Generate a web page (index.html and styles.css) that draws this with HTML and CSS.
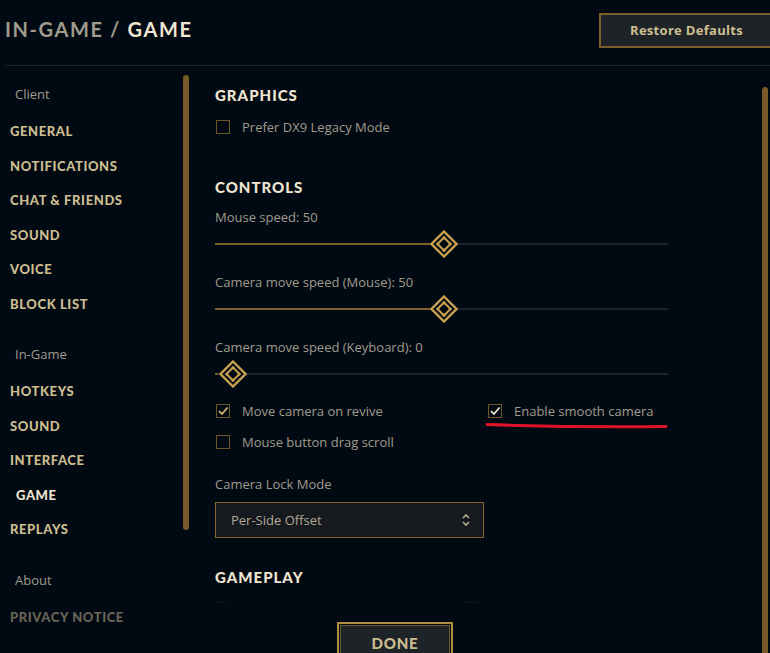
FILE: index.html
```html
<!DOCTYPE html>
<html>
<head>
<meta charset="utf-8">
<link rel="stylesheet" href="styles.css">
</head>
<body>
<div class="app">
  <header class="topbar">
    <h1 class="title"><span class="crumb">IN-GAME / </span><span class="current">GAME</span></h1>
    <button class="restore">Restore Defaults</button>
  </header>
  <div class="main">
    <nav class="sidebar">
      <div class="navlist">
        <div class="group">
          <div class="group-label">Client</div>
          <div class="nav-item">GENERAL</div>
          <div class="nav-item">NOTIFICATIONS</div>
          <div class="nav-item">CHAT &amp; FRIENDS</div>
          <div class="nav-item">SOUND</div>
          <div class="nav-item">VOICE</div>
          <div class="nav-item">BLOCK LIST</div>
        </div>
        <div class="group">
          <div class="group-label">In-Game</div>
          <div class="nav-item">HOTKEYS</div>
          <div class="nav-item">SOUND</div>
          <div class="nav-item">INTERFACE</div>
          <div class="nav-item active">GAME</div>
          <div class="nav-item">REPLAYS</div>
        </div>
        <div class="group">
          <div class="group-label">About</div>
          <div class="nav-item faded">PRIVACY NOTICE</div>
        </div>
      </div>
      <div class="scrollbar left-bar"></div>
    </nav>
    <section class="content">
      <h2 class="section-title first">GRAPHICS</h2>
      <label class="check-row gap-graphics"><span class="box"></span><span class="check-label">Prefer DX9 Legacy Mode</span></label>

      <h2 class="section-title controls">CONTROLS</h2>

      <div class="slider-block first-block">
        <div class="field-label">Mouse speed: 50</div>
        <div class="slider">
          <div class="track"></div>
          <div class="fill" style="width: 215px"></div>
          <svg class="thumb" style="left: 215px" viewBox="0 0 28 28" width="28" height="28"><polygon points="14,1.5 26.5,14 14,26.5 1.5,14" fill="#010a13" stroke="#c8a050" stroke-width="2.4"/><polygon points="14,7.5 20.5,14 14,20.5 7.5,14" fill="#010a13" stroke="#c8a050" stroke-width="2"/><circle cx="14" cy="7.8" r="1.6" fill="#c8a050"/><circle cx="14" cy="20.2" r="1.6" fill="#c8a050"/><circle cx="7.8" cy="14" r="1.6" fill="#c8a050"/><circle cx="20.2" cy="14" r="1.6" fill="#c8a050"/></svg>
        </div>
      </div>
      <div class="slider-block">
        <div class="field-label">Camera move speed (Mouse): 50</div>
        <div class="slider">
          <div class="track"></div>
          <div class="fill" style="width: 215px"></div>
          <svg class="thumb" style="left: 215px" viewBox="0 0 28 28" width="28" height="28"><polygon points="14,1.5 26.5,14 14,26.5 1.5,14" fill="#010a13" stroke="#c8a050" stroke-width="2.4"/><polygon points="14,7.5 20.5,14 14,20.5 7.5,14" fill="#010a13" stroke="#c8a050" stroke-width="2"/><circle cx="14" cy="7.8" r="1.6" fill="#c8a050"/><circle cx="14" cy="20.2" r="1.6" fill="#c8a050"/><circle cx="7.8" cy="14" r="1.6" fill="#c8a050"/><circle cx="20.2" cy="14" r="1.6" fill="#c8a050"/></svg>
        </div>
      </div>
      <div class="slider-block">
        <div class="field-label">Camera move speed (Keyboard): 0</div>
        <div class="slider">
          <div class="track"></div>
          <div class="fill" style="width: 3px"></div>
          <svg class="thumb" style="left: 4px" viewBox="0 0 28 28" width="28" height="28"><polygon points="14,1.5 26.5,14 14,26.5 1.5,14" fill="#010a13" stroke="#c8a050" stroke-width="2.4"/><polygon points="14,7.5 20.5,14 14,20.5 7.5,14" fill="#010a13" stroke="#c8a050" stroke-width="2"/><circle cx="14" cy="7.8" r="1.6" fill="#c8a050"/><circle cx="14" cy="20.2" r="1.6" fill="#c8a050"/><circle cx="7.8" cy="14" r="1.6" fill="#c8a050"/><circle cx="20.2" cy="14" r="1.6" fill="#c8a050"/></svg>
        </div>
      </div>

      <div class="check-grid">
        <label class="check-row"><span class="box checked"><svg viewBox="0 0 14 14" width="14" height="14"><path d="M3 7.2 L6 10 L11.5 3.5" fill="none" stroke="#d8b66a" stroke-width="1.8"/></svg></span><span class="check-label">Move camera on revive</span></label>
        <label class="check-row smooth"><span class="box checked"><svg viewBox="0 0 14 14" width="14" height="14"><path d="M3 7.2 L6 10 L11.5 3.5" fill="none" stroke="#e8e0cc" stroke-width="1.8"/></svg></span><span class="check-label">Enable smooth camera</span>
          <svg class="underline" viewBox="0 0 184 8" width="184" height="8"><path d="M2 2.5 Q 90 5.5 181 4.5" fill="none" stroke="#e0132b" stroke-width="3" stroke-linecap="round"/></svg>
        </label>
        <label class="check-row"><span class="box"></span><span class="check-label">Mouse button drag scroll</span></label>
      </div>

      <div class="field-label lock-label">Camera Lock Mode</div>
      <div class="select">
        <span>Per-Side Offset</span>
        <svg class="arrows" viewBox="0 0 10 16" width="10" height="16"><path d="M2 6 L5 3 L8 6" fill="none" stroke="#b5ab92" stroke-width="1.6"/><path d="M2 10 L5 13 L8 10" fill="none" stroke="#b5ab92" stroke-width="1.6"/></svg>
      </div>

      <h2 class="section-title gameplay">GAMEPLAY</h2>
      <div class="fade-row"><span class="dash"></span><span class="dash right"></span></div>
    </section>
    <div class="scrollbar right-bar"></div>
  </div>
  <div class="done-wrap">
    <span class="flare l"></span>
    <button class="done">DONE</button>
    <span class="flare r"></span>
  </div>
</div>
</body>
</html>
```
FILE: styles.css
```css
html, body {
  margin: 0;
  padding: 0;
  background: #010a13;
  width: 770px;
  height: 653px;
  overflow: hidden;
}
.app {
  position: relative;
  width: 770px;
  height: 653px;
  overflow: hidden;
  font-family: "Open Sans", "Liberation Sans", sans-serif;
}
.topbar {
  height: 66px;
  box-sizing: border-box;
  margin-left: 5px;
  border-bottom: 1px solid #1b252c;
  display: flex;
  justify-content: space-between;
  align-items: flex-start;
}
.title {
  margin: 16px 0 0 0;
  font-family: "Lato", sans-serif;
  font-weight: 700;
  font-size: 20px;
  line-height: 26px;
  letter-spacing: 1.6px;
}
.crumb { color: #a09b8c; }
.current { color: #f0e6d2; }
.restore {
  margin-top: 13px;
  margin-right: -12px;
  width: 183px;
  height: 35px;
  box-sizing: border-box;
  background: #1e2328;
  border: 2px solid #7c5e2a;
  color: #cdbe91;
  font-family: "Open Sans", sans-serif;
  font-weight: 700;
  font-size: 13px;
  letter-spacing: 0.3px;
  padding: 0 8px 1px 0;
}
.main {
  display: flex;
  height: 587px;
}
.sidebar {
  width: 190px;
  display: flex;
  flex-shrink: 0;
}
.navlist {
  width: 183px;
  padding-top: 8px;
}
.group + .group { margin-top: 13px; }
.group-label {
  height: 40px;
  line-height: 40px;
  padding-left: 15px;
  font-size: 13px;
  color: #a09b8c;
}
.nav-item {
  height: 34.5px;
  line-height: 34.5px;
  padding-left: 10px;
  font-family: "Lato", sans-serif;
  font-weight: 900;
  font-size: 13px;
  letter-spacing: 0.6px;
  color: #cdbe91;
}
.nav-item.active {
  color: #f0e6d2;
  padding-left: 16px;
}
.nav-item.faded { color: #6a6556; }
.scrollbar {
  width: 6px;
  background: #785a28;
  border-radius: 3px;
  flex-shrink: 0;
}
.left-bar {
  margin-top: 9px;
  height: 455px;
}
.content {
  flex: 1;
  padding-left: 25px;
  padding-top: 19px;
}
.right-bar {
  margin-top: 21px;
  margin-right: 2px;
  height: 566px;
  border-radius: 3px 3px 0 0;
}
.section-title {
  margin: 0;
  height: 20px;
  line-height: 20px;
  font-family: "Lato", sans-serif;
  font-weight: 900;
  font-size: 15px;
  letter-spacing: 1px;
  color: #f0e6d2;
}
.section-title.controls { margin-top: 40px; }
.section-title.gameplay { margin-top: 29px; }
.check-row {
  display: flex;
  align-items: center;
  height: 20px;
  position: relative;
}
.gap-graphics { margin-top: 12px; }
.box {
  width: 14px;
  height: 14px;
  box-sizing: border-box;
  border: 1.5px solid #6e5429;
  margin-left: 1px;
  margin-right: 12px;
  display: flex;
  align-items: center;
  justify-content: center;
}
.box svg { flex-shrink: 0; }
.check-label {
  font-size: 13px;
  color: #a09b8c;
}
.field-label {
  height: 18px;
  line-height: 18px;
  font-size: 13px;
  color: #a09b8c;
}
.slider-block { margin-top: 16px; }
.slider-block.first-block { margin-top: 11px; }
.slider {
  position: relative;
  margin-top: 5px;
  height: 26px;
  width: 453px;
}
.track {
  position: absolute;
  left: 0;
  right: 0;
  top: 12px;
  height: 2px;
  background: #1e2328;
}
.fill {
  position: absolute;
  left: 0;
  top: 12px;
  height: 2px;
  background: #7f6029;
}
.thumb {
  position: absolute;
  top: -1px;
}
.check-grid {
  margin-top: 14px;
  display: grid;
  grid-template-columns: 272px 200px;
  row-gap: 11px;
}
.underline {
  position: absolute;
  left: -2px;
  top: 21px;
}
.lock-label { margin-top: 23px; }
.select {
  margin-top: 9px;
  width: 269px;
  height: 36px;
  box-sizing: border-box;
  border: 1px solid #866632;
  background: #16191d;
  display: flex;
  align-items: center;
  justify-content: space-between;
  padding: 0 12px 0 15px;
  font-size: 13px;
  color: #b1aa97;
}
.fade-row {
  margin-top: 15px;
  height: 2px;
  position: relative;
  width: 270px;
}
.dash {
  position: absolute;
  left: 0;
  width: 12px;
  height: 1px;
  background: #0e161c;
}
.dash.right { left: 248px; width: 16px; }
.done-wrap {
  position: absolute;
  left: 332px;
  top: 622px;
  display: flex;
  align-items: flex-end;
}
.done {
  width: 116px;
  height: 42px;
  box-sizing: border-box;
  background: #1e2328;
  border: 2px solid #b08b42;
  box-shadow: inset 0 0 0 1px #010a13, inset 0 0 0 2px #6e5429;
  color: #cdbe91;
  font-family: "Lato", sans-serif;
  font-weight: 900;
  font-size: 15px;
  letter-spacing: 0.8px;
  padding: 0 0 1px 0;
  margin: 0 1px;
}
.flare {
  width: 2px;
  height: 10px;
  background: #6e5429;
  margin-bottom: 1px;
}
.flare.l { margin-right: 2px; }
.flare.r { margin-left: 2px; }
```
